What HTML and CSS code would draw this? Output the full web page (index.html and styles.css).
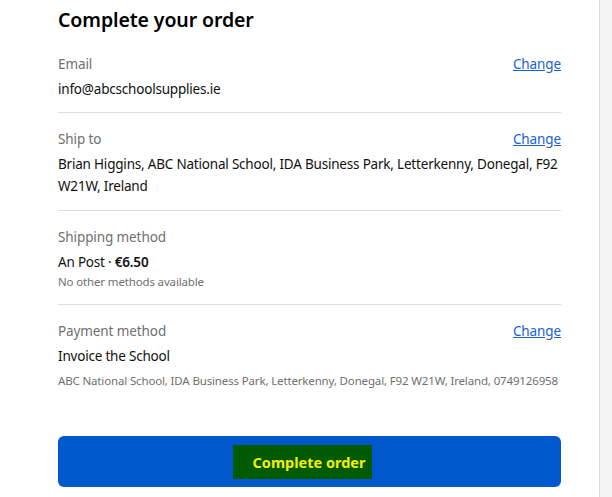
FILE: index.html
```html
<!DOCTYPE html>
<html lang="en">
<head>
<meta charset="utf-8">
<title>Complete your order</title>
<link rel="stylesheet" href="styles.css">
</head>
<body>
<div class="page">
  <main class="main">
    <h1 class="title">Complete your order</h1>

    <section class="section first">
      <div class="row">
        <span class="label">Email</span>
        <a class="change" href="#">Change</a>
      </div>
      <div class="value">info@abcschoolsupplies.ie</div>
    </section>

    <section class="section">
      <div class="row">
        <span class="label">Ship to</span>
        <a class="change" href="#">Change</a>
      </div>
      <div class="value">Brian Higgins, ABC National School, IDA Business Park, Letterkenny, Donegal, F92 W21W, Ireland</div>
    </section>

    <section class="section">
      <div class="row">
        <span class="label">Shipping method</span>
      </div>
      <div class="value">An Post · <strong>€6.50</strong></div>
      <div class="note">No other methods available</div>
    </section>

    <section class="section">
      <div class="row">
        <span class="label">Payment method</span>
        <a class="change" href="#">Change</a>
      </div>
      <div class="value">Invoice the School</div>
      <div class="note spaced">ABC National School, IDA Business Park, Letterkenny, Donegal, F92 W21W, Ireland, 0749126958</div>
    </section>

    <button class="submit" type="button"><span class="highlight">Complete order</span></button>
  </main>
  <aside class="side"></aside>
</div>
</body>
</html>
```

FILE: styles.css
```css
* { box-sizing: border-box; }

html, body {
  margin: 0;
  padding: 0;
  height: 100%;
  background: #ffffff;
}

body {
  font-family: "Noto Sans", "Open Sans", sans-serif;
  color: #111111;
  overflow: hidden;
}

.page {
  display: flex;
  min-height: 497px;
}

.main {
  flex: 1;
  padding: 0 38px 0 58px;
}

.side {
  width: 13px;
  background: #f3f3f3;
  border-left: 1px solid #dcdcdc;
}

.title {
  margin: 6px 0 4px;
  font-size: 19.5px;
  line-height: 28px;
  font-weight: 600;
  color: #000000;
  letter-spacing: -0.1px;
}

.section {
  border-top: 1px solid #dedede;
  padding: 16px 0 13px;
}

.section.first {
  border-top: none;
  padding-bottom: 12px;
}

.row {
  display: flex;
  justify-content: space-between;
  align-items: center;
  height: 20px;
  margin-bottom: 4px;
}

.label {
  font-size: 13.5px;
  line-height: 20px;
  color: #707070;
  letter-spacing: -0.1px;
}

.change {
  font-size: 13.5px;
  line-height: 20px;
  color: #1a5fd6;
  text-decoration: underline;
  letter-spacing: -0.1px;
}

.value {
  font-size: 13.5px;
  line-height: 22px;
  color: #111111;
  letter-spacing: -0.2px;
}

.value strong {
  font-weight: 600;
}

.note {
  font-size: 11.5px;
  line-height: 18px;
  color: #707070;
  letter-spacing: -0.15px;
}

.note.spaced {
  margin-top: 5px;
}

.submit {
  display: flex;
  justify-content: center;
  align-items: center;
  width: 100%;
  height: 51px;
  margin-top: 33px;
  border: none;
  border-radius: 6px;
  background: #0058cc;
  padding: 0;
  font-family: inherit;
  cursor: pointer;
}

.highlight {
  display: inline-block;
  background: #005a00;
  color: #f4f000;
  font-size: 14.5px;
  font-weight: 700;
  line-height: 34px;
  padding: 0 7px 0 20px;
  margin-right: 14px;
}
```
